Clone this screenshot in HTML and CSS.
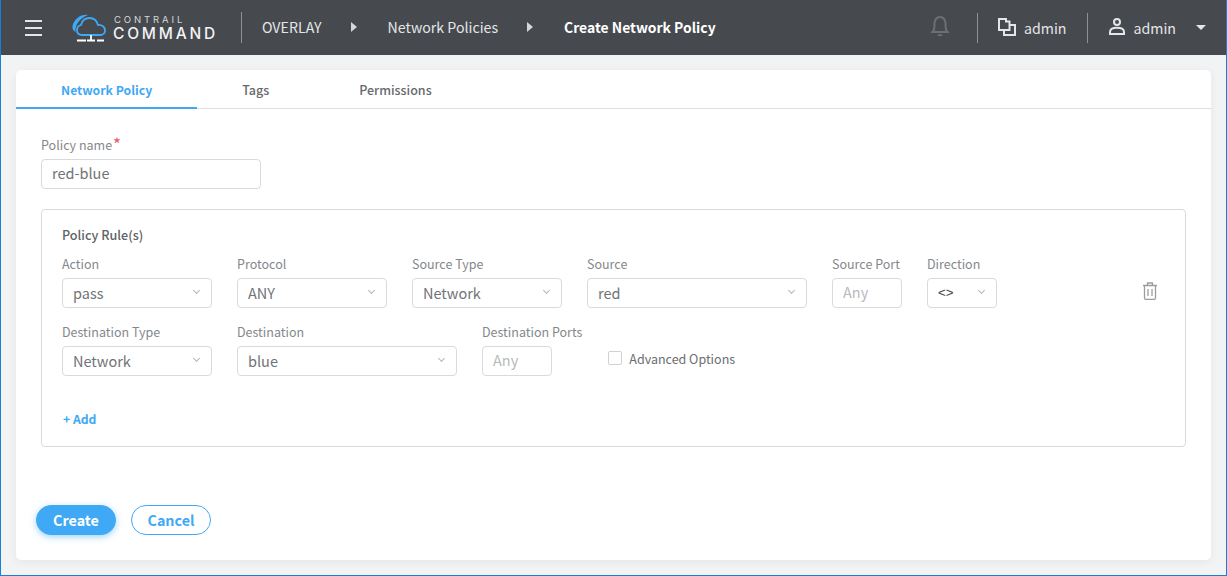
FILE: index.html
```html
<!DOCTYPE html>
<html lang="en">
<head>
  <meta charset="UTF-8">
  <title>Create Network Policy</title>
  <link rel="stylesheet" href="styles.css">
</head>
<body>
  <header class="topbar">
    <div class="burger"><span></span><span></span><span></span></div>
    <div class="logo">
      <svg class="logo-icon" width="34" height="28" viewBox="0 0 34 28" fill="none">
        <path d="M16 1C9 0 2 5 0.500 12C0 15 1.500 17 3.500 18C2.500 11 8 4 16 1Z" fill="#3fa9f5"/>
        <path d="M10 21C6.500 21 5 18.500 5 16C5 13 7 11.500 9 11C10 6.500 13.500 4 17.500 4C22 4 25 7 26 11C30 10.500 33 13 33 16.500C33 19 31 21 28.500 21Z" stroke="#3fa9f5" stroke-width="1.800"/>
        <path d="M19 21V26" stroke="#fff" stroke-width="1.800"/>
        <path d="M5 26.500H14M15 26.500H23M25 26.500H32" stroke="#fff" stroke-width="2"/>
      </svg>
      <div class="logo-text">
        <div class="logo-small">CONTRAIL</div>
        <div class="logo-big">COMMAND</div>
      </div>
    </div>
    <div class="crumbs">
      <span class="crumb">OVERLAY</span>
      <span class="crumb-arrow"></span>
      <span class="crumb">Network Policies</span>
      <span class="crumb-arrow"></span>
      <span class="crumb current">Create Network Policy</span>
    </div>
    <div class="top-right">
      <svg class="bell" width="18" height="22" viewBox="0 0 18 22" fill="none" stroke="#6d7073" stroke-width="2">
        <path d="M1.500 17C3.500 15.500 3.500 13 3.500 9.500C3.500 5 5.500 2 9 2C12.500 2 14.500 5 14.500 9.500C14.500 13 14.500 15.500 16.500 17Z"/>
        <path d="M7 19.500C7.500 20.500 10.500 20.500 11 19.500"/>
      </svg>
      <span class="top-sep"></span>
      <div class="top-item project">
        <svg class="top-icon" width="18" height="18" viewBox="0 0 18 18" fill="none" stroke="#e4e6e8" stroke-width="2">
          <path d="M1 1H8V3.500H11.500V12H1Z"/>
          <path d="M6 12V17H17V7H11.500"/>
        </svg>
        <span>admin</span>
      </div>
      <span class="top-sep"></span>
      <div class="top-item user">
        <svg class="top-icon" width="16" height="17" viewBox="0 0 16 17" fill="none" stroke="#e4e6e8" stroke-width="2">
          <circle cx="8" cy="4" r="3"/>
          <path d="M1 16V14C1 11.500 3.500 9.800 8 9.800C12.500 9.800 15 11.500 15 14V16Z"/>
        </svg>
        <span>admin</span>
      </div>
      <span class="top-caret"></span>
    </div>
  </header>

  <main class="card">
    <nav class="tabs">
      <div class="tab active">Network Policy</div>
      <div class="tab">Tags</div>
      <div class="tab">Permissions</div>
    </nav>

    <div class="form">
      <div class="field name-field">
        <label class="label">Policy name<span class="req">*</span></label>
        <div class="control w220">red-blue</div>
      </div>

      <section class="panel">
        <h3 class="panel-title">Policy Rule(s)</h3>
        <div class="rule-row">
          <div class="field"><label class="label">Action</label><div class="control select w150">pass</div></div>
          <div class="field"><label class="label">Protocol</label><div class="control select w150">ANY</div></div>
          <div class="field"><label class="label">Source Type</label><div class="control select w150">Network</div></div>
          <div class="field"><label class="label">Source</label><div class="control select w220">red</div></div>
          <div class="field"><label class="label">Source Port</label><div class="control w70 placeholder">Any</div></div>
          <div class="field"><label class="label">Direction</label><div class="control select w70 dir">&lt;&gt;</div></div>
          <svg class="trash" width="14" height="18" viewBox="0 0 14 18" fill="none" stroke="#9a9da0" stroke-width="1.300">
            <path d="M0 3.500H14M4.500 3.500V1H9.500V3.500M1.500 3.500V16C1.500 16.800 2 17.300 2.800 17.300H11.200C12 17.300 12.500 16.800 12.500 16V3.500"/>
            <path d="M5 7V14M9 7V14"/>
          </svg>
        </div>
        <div class="rule-row second">
          <div class="field"><label class="label">Destination Type</label><div class="control select w150">Network</div></div>
          <div class="field"><label class="label">Destination</label><div class="control select w220">blue</div></div>
          <div class="field"><label class="label">Destination Ports</label><div class="control w70 placeholder">Any</div></div>
          <div class="advanced"><span class="checkbox"></span>Advanced Options</div>
        </div>
        <a class="add-link">+ Add</a>
      </section>

      <div class="actions">
        <button class="btn primary">Create</button>
        <button class="btn ghost">Cancel</button>
      </div>
    </div>
  </main>
</body>
</html>
```

FILE: styles.css
```css
* {
  box-sizing: border-box;
}

html, body {
  margin: 0;
  height: 576px;
  overflow: hidden;
}

body {
  font-family: "Noto Sans CJK SC", "Noto Sans", sans-serif;
  background-color: #f1f3f5;
  border-left: 1px solid #1a7fd6;
  border-right: 1px solid #1a7fd6;
  border-bottom: 1px solid #1a7fd6;
  color: #55585b;
}

.topbar {
  height: 55px;
  background-color: #46494e;
  display: flex;
  align-items: center;
  padding-left: 24px;
  color: #e4e6e8;
  font-size: 14.200px;
}

.burger {
  width: 17px;
  display: flex;
  flex-direction: column;
  gap: 5px;
}

.burger span {
  height: 2px;
  background-color: #e4e6e8;
}

.logo {
  display: flex;
  align-items: center;
  margin-left: 30px;
  width: 170px;
  height: 31px;
  border-right: 1px solid #8f9194;
}

.logo-text {
  margin-left: 7px;
  font-family: Inter, sans-serif;
  color: #f2f3f4;
}

.logo-small {
  font-size: 9.500px;
  line-height: 12px;
  letter-spacing: 2.900px;
  margin-left: 1px;
  color: #d5d7d9;
}

.logo-big {
  font-size: 15.500px;
  line-height: 16px;
  letter-spacing: 2.800px;
  font-weight: 500;
}

.crumbs {
  display: flex;
  align-items: center;
  margin-left: 20px;
  line-height: 20px;
  margin-top: -1px;
}

.crumb-arrow {
  width: 0;
  height: 0;
  margin: 0 31px 0 29px;
  border-left: 6px solid #d5d7d9;
  border-top: 5px solid transparent;
  border-bottom: 5px solid transparent;
}

.crumb.current {
  color: #fff;
  font-size: 13.900px;
  font-weight: 700;
}

.top-right {
  margin-left: auto;
  display: flex;
  align-items: center;
}

.top-sep {
  width: 1px;
  height: 30px;
  background-color: #8f9194;
}

.bell {
  margin-right: 28px;
  margin-top: -3px;
}

.top-item {
  display: flex;
  align-items: center;
  line-height: 20px;
}

.top-icon {
  margin-top: -2px;
}

.project {
  margin-left: 20px;
  margin-right: 20px;
  gap: 8px;
}

.user {
  margin-left: 21px;
  gap: 9px;
}

.top-caret {
  width: 0;
  height: 0;
  margin-left: 20px;
  margin-right: 20px;
  border-top: 5px solid #e4e6e8;
  border-left: 5px solid transparent;
  border-right: 5px solid transparent;
}

.card {
  margin: 15px 15px 0;
  height: 490px;
  background-color: #fff;
  border-radius: 5px;
  box-shadow: 0 2px 8px rgba(0,0,0,0.06);
}

.tabs {
  display: flex;
  height: 39px;
  border-bottom: 1px solid #dedfe0;
}

.tab {
  height: 39px;
  padding: 0 45px;
  font-size: 12.500px;
  line-height: 40px;
  font-weight: 500;
  color: #66696c;
}

.tab.active {
  color: #3fa9f5;
  font-size: 12.200px;
  font-weight: 700;
  border-bottom: 2px solid #3fa9f5;
}

.form {
  padding: 27px 25px 0;
}

.field {
  display: flex;
  flex-direction: column;
}

.label {
  font-size: 12.500px;
  line-height: 18px;
  color: #85888b;
  margin-bottom: 5px;
}

.req {
  color: #ec5570;
  font-size: 17px;
  line-height: 10px;
  position: relative;
  top: 1px;
  left: 1px;
}

.control {
  height: 30px;
  border: 1px solid #d9dadb;
  border-radius: 4px;
  padding-left: 10px;
  font-size: 14.500px;
  line-height: 27px;
  color: #717477;
  position: relative;
}

.name-field .control,
.placeholder {
  line-height: 26px;
}

.w70 { width: 70px; }
.w150 { width: 150px; }
.w220 { width: 220px; }

.select::after {
  content: "";
  position: absolute;
  right: 12px;
  top: 9px;
  width: 4px;
  height: 4px;
  border-right: 1px solid #b5b7b9;
  border-bottom: 1px solid #b5b7b9;
  transform: rotate(45deg);
}

.placeholder {
  color: #b8babc;
}

.dir {
  font-family: "Liberation Sans", sans-serif;
  font-size: 13.300px;
  line-height: 27px;
  color: #444;
}

.panel {
  margin-top: 20px;
  width: 1145px;
  height: 238px;
  border: 1px solid #d9dadb;
  border-radius: 4px;
  padding: 16px 20px 0;
}

.panel-title {
  margin: 0 0 11px;
  font-size: 12.600px;
  line-height: 18px;
  font-weight: 500;
  color: #606366;
}

.rule-row {
  display: flex;
  gap: 25px;
  position: relative;
}

.rule-row.second {
  margin-top: 15px;
}

.trash {
  position: absolute;
  left: 1081px;
  top: 27px;
}

.advanced {
  display: flex;
  align-items: center;
  margin-top: 26px;
  margin-left: 1px;
  height: 18px;
  font-size: 12.500px;
  color: #6b6e71;
}

.checkbox {
  width: 14px;
  height: 14px;
  margin-right: 7px;
  border: 1px solid #d0d1d2;
  border-radius: 2px;
}

.add-link {
  display: block;
  margin-top: 34px;
  margin-left: 1px;
  font-size: 12.200px;
  line-height: 18px;
  font-weight: 700;
  color: #3fa9f5;
}

.actions {
  display: flex;
  gap: 15px;
  margin-top: 58px;
  margin-left: -5px;
}

.btn {
  width: 80px;
  height: 30px;
  border-radius: 15px;
  font-family: inherit;
  font-size: 14.300px;
  font-weight: 700;
  line-height: 26px;
  padding: 0;
}

.btn.primary {
  background-color: #3fa9f5;
  border: 1px solid #3fa9f5;
  color: #fff;
  box-shadow: 0 2px 6px rgba(63,169,245,0.5);
}

.btn.ghost {
  background-color: #fff;
  border: 1px solid #3fa9f5;
  color: #3fa9f5;
}
```
